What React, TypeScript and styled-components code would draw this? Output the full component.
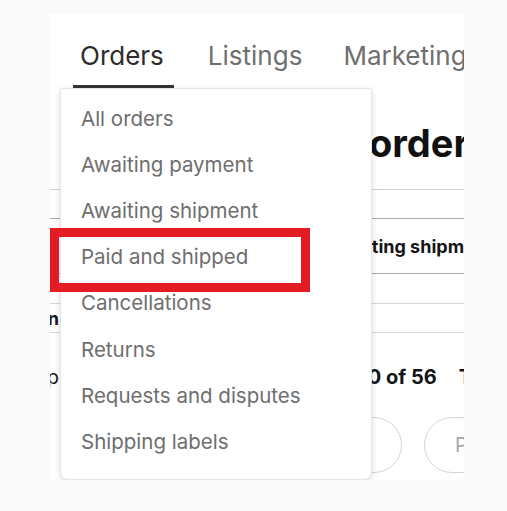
import React from "react";
import styled, { createGlobalStyle } from "styled-components";

const Global = createGlobalStyle`
  html, body { margin: 0; padding: 0; background: #fafafa; }
  body { font-family: Inter, "Open Sans", Arial, sans-serif; }
`;

const Page = styled.div`
  width: 507px;
  height: 511px;
  padding: 14px 0 0 50px;
  box-sizing: border-box;
`;

const Panel = styled.div`
  position: relative;
  width: 414px;
  height: 466px;
  background: #fff;
  overflow: hidden;
  display: flex;
  flex-direction: column;
`;

const TabBar = styled.nav`
  display: flex;
  gap: 27px;
  height: 74px;
  padding-left: 23px;
  flex-shrink: 0;
  box-sizing: border-box;
`;

const Tab = styled.div<{ $active?: boolean }>`
  display: flex;
  align-items: flex-end;
  padding: 0 ${(p) => (p.$active ? "10px" : "7px")} 14px 7px;
  font-size: 26px;
  white-space: nowrap;
  color: ${(p) => (p.$active ? "#2c2c2c" : "#6f6f6f")};
  border-bottom: 3px solid ${(p) => (p.$active ? "#333" : "transparent")};
  height: 74px;
  box-sizing: border-box;
  flex-shrink: 0;
`;

const Heading = styled.h1`
  margin: 0;
  height: 102px;
  padding: 36px 0 0 319px;
  box-sizing: border-box;
  font-size: 38px;
  font-weight: 700;
  color: #111;
  white-space: nowrap;
  line-height: 38px;
  border-bottom: 1px solid #d0d0d0;
  flex-shrink: 0;
`;

const Spacer = styled.div<{ $h: number }>`
  height: ${(p) => p.$h}px;
  flex-shrink: 0;
`;

const StatusRow = styled.div`
  display: flex;
  align-items: center;
  height: 56px;
  box-sizing: border-box;
  border-top: 1px solid #a8a8a8;
  border-bottom: 1px solid #a8a8a8;
  padding-left: 279px;
  font-size: 18px;
  font-weight: 700;
  color: #151515;
  white-space: nowrap;
  flex-shrink: 0;
`;

const FilterRow = styled.div`
  display: flex;
  align-items: center;
  height: 30px;
  box-sizing: border-box;
  border-top: 1px solid #d6d6d6;
  border-bottom: 1px solid #d6d6d6;
  font-size: 18px;
  font-weight: 700;
  color: #151515;
  white-space: nowrap;
  flex-shrink: 0;
`;

const ClippedLabel = styled.span<{ $bold?: boolean }>`
  display: inline-block;
  flex-shrink: 0;
  width: 80px;
  margin-left: -71px;
  text-align: right;
  font-weight: ${(p) => (p.$bold ? 700 : 400)};
  color: #1a1a1a;
`;

const ResultsRow = styled.div`
  display: flex;
  align-items: center;
  height: 60px;
  margin-top: 14px;
  font-size: 20px;
  white-space: nowrap;
  flex-shrink: 0;
`;

const ResultsCount = styled.span`
  margin-left: 278px;
  font-weight: 700;
  color: #151515;
  flex-shrink: 0;
`;

const SortLabel = styled.span`
  margin-left: 22px;
  font-weight: 700;
  color: #151515;
  flex-shrink: 0;
`;

const PillRow = styled.div`
  display: flex;
  gap: 22px;
  margin-top: 10px;
  padding-left: 200px;
  flex-shrink: 0;
`;

const Pill = styled.div<{ $w: number }>`
  width: ${(p) => p.$w}px;
  height: 56px;
  box-sizing: border-box;
  border: 1px solid #d4d4d4;
  border-radius: 28px;
  display: flex;
  align-items: center;
  padding-left: 30px;
  font-size: 20px;
  color: #a8a8a8;
  flex-shrink: 0;
  white-space: nowrap;
`;

const Menu = styled.ul`
  position: absolute;
  left: 10px;
  top: 74px;
  width: 312px;
  height: 392px;
  margin: 0;
  padding: 6px 0 0;
  box-sizing: border-box;
  list-style: none;
  background: #fff;
  border: 1px solid #e6e6e6;
  border-radius: 2px 2px 8px 8px;
  box-shadow: 0 2px 6px rgba(0, 0, 0, 0.14);
`;

const MenuItem = styled.li`
  height: 46.2px;
  display: flex;
  align-items: center;
  padding-left: 20px;
  font-size: 20.5px;
  color: #6e6e6e;
  white-space: nowrap;
`;

const Highlight = styled.div`
  position: absolute;
  left: 0;
  top: 214px;
  width: 260px;
  height: 64px;
  box-sizing: border-box;
  border: 9px solid #e31c23;
`;

const items = [
  "All orders",
  "Awaiting payment",
  "Awaiting shipment",
  "Paid and shipped",
  "Cancellations",
  "Returns",
  "Requests and disputes",
  "Shipping labels",
];

export default function App() {
  return (
    <Page>
      <Global />
      <Panel>
        <TabBar>
          <Tab $active>Orders</Tab>
          <Tab>Listings</Tab>
          <Tab>Marketing</Tab>
        </TabBar>
        <Heading>orders</Heading>
        <Spacer $h={28} />
        <StatusRow>Awaiting shipment (3)</StatusRow>
        <Spacer $h={29} />
        <FilterRow>
          <ClippedLabel $bold>Action</ClippedLabel>
        </FilterRow>
        <ResultsRow>
          <ClippedLabel>Shop</ClippedLabel>
          <ResultsCount>1-50 of 56</ResultsCount>
          <SortLabel>Time</SortLabel>
        </ResultsRow>
        <PillRow>
          <Pill $w={152}>Print</Pill>
          <Pill $w={160}>Print</Pill>
        </PillRow>
        <Menu>
          {items.map((t) => (
            <MenuItem key={t}>{t}</MenuItem>
          ))}
        </Menu>
        <Highlight />
      </Panel>
    </Page>
  );
}
